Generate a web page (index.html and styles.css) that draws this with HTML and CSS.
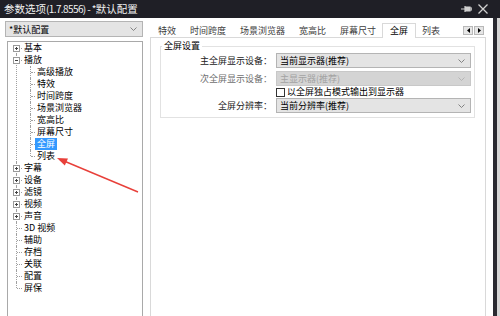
FILE: index.html
```html
<!DOCTYPE html>
<html lang="zh-CN">
<head>
    <meta charset="UTF-8">
    <title>参数选项(1.7.8556) - *默认配置</title>
    <link rel="stylesheet" href="styles.css">
</head>
<body>

    <div class="window">
        <div class="titlebar">
            <span class="title">参数选项<span class="title-ver">(1.7.8556) - *</span>默认配置</span>
            <span class="title-buttons">
                <svg class="pin" width="11" height="8" viewBox="0 0 11 8">
                    <path d="M0 4H4M4 1V7M4 2H9V6H4M9 3H11V5H9" fill="none" stroke="#d0d0d0" stroke-width="1.2"/>
                    <rect x="4" y="2" width="5" height="4" fill="#d0d0d0"/>
                </svg>
                <svg class="close" width="10" height="10" viewBox="0 0 10 10">
                    <path d="M0.5 0.5L9.5 9.5M9.5 0.5L0.5 9.5" stroke="#d0d0d0" stroke-width="1.3"/>
                </svg>
            </span>
        </div>

        <div class="content">
            <aside class="sidebar">
                <div class="combo profile">
                    <span>*默认配置</span>
                    <svg class="chev" width="7" height="4" viewBox="0 0 7 4"><path d="M0.5 0.5L3.5 3.5L6.5 0.5" fill="none" stroke="#777" stroke-width="0.9"/></svg>
                </div>

                <ul class="tree">
                    <li><span class="toggle plus"></span><span class="label">基本</span></li>
                    <li><span class="toggle minus"></span><span class="label">播放</span>
                        <ul class="branch">
                            <li><span class="label">高级播放</span></li>
                            <li><span class="label">特效</span></li>
                            <li><span class="label">时间跨度</span></li>
                            <li><span class="label">场景浏览器</span></li>
                            <li><span class="label">宽高比</span></li>
                            <li><span class="label">屏幕尺寸</span></li>
                            <li><span class="label selected">全屏</span></li>
                            <li><span class="label">列表</span></li>
                        </ul>
                    </li>
                    <li><span class="toggle plus"></span><span class="label">字幕</span></li>
                    <li><span class="toggle plus"></span><span class="label">设备</span></li>
                    <li><span class="toggle plus"></span><span class="label">滤镜</span></li>
                    <li><span class="toggle plus"></span><span class="label">视频</span></li>
                    <li><span class="toggle plus"></span><span class="label">声音</span></li>
                    <li class="leaf"><span class="label">3D 视频</span></li>
                    <li class="leaf"><span class="label">辅助</span></li>
                    <li class="leaf"><span class="label">存档</span></li>
                    <li class="leaf"><span class="label">关联</span></li>
                    <li class="leaf"><span class="label">配置</span></li>
                    <li class="leaf"><span class="label">屏保</span></li>
                </ul>
            </aside>

            <main class="prefs">
                <div class="tabs">
                    <span class="tab">特效</span>
                    <span class="tab">时间跨度</span>
                    <span class="tab">场景浏览器</span>
                    <span class="tab">宽高比</span>
                    <span class="tab">屏幕尺寸</span>
                    <span class="tab active">全屏</span>
                    <span class="tab">列表</span>
                    <span class="tab-scroll">
                        <span class="scroll-btn">
                            <svg width="3" height="5" viewBox="0 0 3 5"><path d="M3 0V5L0 2.5Z" fill="#000"/></svg>
                        </span>
                        <span class="scroll-btn">
                            <svg width="3" height="5" viewBox="0 0 3 5"><path d="M0 0V5L3 2.5Z" fill="#000"/></svg>
                        </span>
                    </span>
                </div>

                <div class="page">
                    <fieldset class="group">
                        <legend>全屏设置</legend>
                        <div class="form">
                            <label class="field-label">主全屏显示设备：</label>
                            <div class="combo">
                                <span>当前显示器(推荐)</span>
                                <svg class="chev" width="7" height="4" viewBox="0 0 7 4"><path d="M0.5 0.5L3.5 3.5L6.5 0.5" fill="none" stroke="#777" stroke-width="0.9"/></svg>
                            </div>

                            <label class="field-label disabled">次全屏显示设备：</label>
                            <div class="combo disabled">
                                <span>主显示器(推荐)</span>
                                <svg class="chev" width="7" height="4" viewBox="0 0 7 4"><path d="M0.5 0.5L3.5 3.5L6.5 0.5" fill="none" stroke="#b0b0b0" stroke-width="0.9"/></svg>
                            </div>

                            <span></span>
                            <label class="check-row">
                                <span class="checkbox"></span>
                                <span>以全屏独占模式输出到显示器</span>
                            </label>

                            <label class="field-label">全屏分辨率：</label>
                            <div class="combo">
                                <span>当前分辨率(推荐)</span>
                                <svg class="chev" width="7" height="4" viewBox="0 0 7 4"><path d="M0.5 0.5L3.5 3.5L6.5 0.5" fill="none" stroke="#777" stroke-width="0.9"/></svg>
                            </div>
                        </div>
                    </fieldset>
                </div>
            </main>
        </div>

        <!-- annotation arrow pointing at the 列表 node -->
        <svg class="annotation" width="500" height="316" viewBox="0 0 500 316">
            <line x1="138" y1="192" x2="64" y2="161" stroke="#e8403a" stroke-width="1.4"/>
            <path d="M57 158L68 158.6L64.8 165.4Z" fill="#e8403a"/>
        </svg>
    </div>

    <div class="backdrop">
        <div class="backdrop-top"></div>
        <div class="backdrop-edge"></div>
    </div>

</body>
</html>
```

FILE: styles.css
```css
/* Page */
html, body {
    margin: 0;
    padding: 0;
    height: 100%;
}

body {
    display: flex;
    width: 500px;
    height: 316px;
    overflow: hidden;
    font-family: "Noto Sans CJK SC", "Noto Sans", sans-serif;
    font-size: 9px;
    color: #000;
    background: #ffffff;
}

ul {
    list-style: none;
    margin: 0;
    padding: 0;
}

/* Window */
.window {
    position: relative;
    width: 493px;
    display: flex;
    flex-direction: column;
    background: #ffffff;
}

.titlebar {
    height: 18px;
    flex: none;
    display: flex;
    align-items: center;
    justify-content: space-between;
    padding: 0 4px;
    background: #1f1f26;
    color: #f2f2f2;
}

.title {
    font-size: 10.5px;
    line-height: 18px;
}

.title-ver {
    letter-spacing: -0.6px;
    font-size: 10px;
}

.title-buttons {
    display: flex;
    align-items: center;
    gap: 6px;
    padding-right: 1px;
}

.content {
    flex: 1;
    display: flex;
    min-height: 0;
}

/* Left column */
.sidebar {
    width: 138px;
    margin: 3px 0 0 5px;
    display: flex;
    flex-direction: column;
}

.combo {
    height: 15px;
    box-sizing: border-box;
    display: flex;
    align-items: center;
    justify-content: space-between;
    padding: 0 5px 0 3px;
    background: #e4e4e4;
    border: 1px solid #b4b4b4;
    line-height: 13px;
}

.combo.profile {
    height: 16px;
    padding-left: 3px;
    padding-right: 5px;
}

.combo.disabled {
    background: #d4d4d4;
    border-color: #c8c8c8;
    color: #a3a3a3;
}

.tree {
    flex: 1;
    margin: 4px 0 0 2px;
    padding: 0;
    border: 1px solid #a9a9a9;
    border-bottom: none;
    background: #ffffff;
}

.tree li {
    position: relative;
    padding-left: 14px;
    line-height: 12px;
}

/* dotted tree lines */
.tree li::before {
    content: "";
    position: absolute;
    left: 8px;
    top: 0;
    bottom: 0;
    border-left: 1px dotted #a0a0a0;
}

.tree > li:first-child::before {
    top: 6px;
}

.tree li:last-child::before {
    bottom: auto;
    height: 6px;
}

.tree li::after {
    content: "";
    position: absolute;
    left: 9px;
    top: 6px;
    width: 5px;
    border-top: 1px dotted #a0a0a0;
}

.branch li {
    padding-left: 13px;
}

.branch li::before {
    left: 8px;
}

.branch li::after {
    left: 9px;
    width: 4px;
}

.label {
    display: inline-block;
    height: 12px;
    padding: 0 2px;
    vertical-align: top;
}

.label.selected {
    background: #3399ff;
    color: #ffffff;
}

.toggle {
    position: absolute;
    left: 5px;
    top: 3px;
    width: 7px;
    height: 7px;
    box-sizing: border-box;
    border: 1px solid #9a9a9a;
    background: #ffffff;
    z-index: 1;
}

.toggle::before {
    content: "";
    position: absolute;
    left: 1px;
    top: 2px;
    width: 3px;
    height: 1px;
    background: #444;
}

.toggle.plus::after {
    content: "";
    position: absolute;
    left: 2px;
    top: 1px;
    width: 1px;
    height: 3px;
    background: #444;
}

/* Right column */
.prefs {
    flex: 1;
    margin: 3px 7px 0 7px;
    display: flex;
    flex-direction: column;
    min-width: 0;
}

.tabs {
    height: 16px;
    flex: none;
    display: flex;
    align-items: flex-end;
    padding-left: 1px;
    color: #3c3c3c;
}

.tab {
    height: 14px;
    box-sizing: border-box;
    padding: 0 6px;
    line-height: 13px;
    border: 1px solid transparent;
    border-bottom: none;
}

.tab.active {
    padding: 0 7px;
    margin: 0 -1px -1px;
    height: 15px;
    border-color: #d9d9d9;
    background: #ffffff;
    color: #000;
    position: relative;
}

.tab-scroll {
    margin: 0 2px 2px auto;
    display: flex;
}

.scroll-btn {
    width: 10px;
    height: 9px;
    box-sizing: border-box;
    display: flex;
    align-items: center;
    justify-content: center;
    background: #e6e6e6;
    border: 1px solid #b8b8b8;
}

.scroll-btn + .scroll-btn {
    margin-left: 1px;
}

.page {
    flex: 1;
    border: 1px solid #d9d9d9;
    border-bottom: none;
    padding: 2px 10px 0 9px;
    background: #ffffff;
}

.group {
    margin: 0;
    padding: 1px 3px 7px 0;
    border: 1px solid #e2e2e2;
}

.group legend {
    margin-left: 1px;
    padding: 0 2px;
    line-height: 12px;
}

.form {
    display: grid;
    grid-template-columns: 111px 1fr;
    grid-template-rows: 15px 15px 12px 15px;
    column-gap: 4px;
    align-items: center;
}

.form > :nth-child(n+3) {
    margin-top: 6px;
}

.field-label {
    text-align: right;
    color: #222;
    line-height: 15px;
}

.field-label.disabled {
    color: #6f6f6f;
}

.check-row {
    display: flex;
    align-items: center;
    gap: 2px;
    line-height: 12px;
}

.checkbox {
    width: 9px;
    height: 9px;
    box-sizing: border-box;
    border: 1px solid #333;
    background: #ffffff;
}

/* Annotation arrow lies over the tree */
.annotation {
    position: absolute;
    left: 0;
    top: 0;
    pointer-events: none;
}

/* Strip of the window behind */
.backdrop {
    flex: 1;
    display: flex;
    flex-direction: column;
}

.backdrop-top {
    height: 18px;
    background: #1f1f26;
}

.backdrop-edge {
    flex: 1;
    background: linear-gradient(to right, #2a2a31 4px, #d6d6d6 4px);
}
```
